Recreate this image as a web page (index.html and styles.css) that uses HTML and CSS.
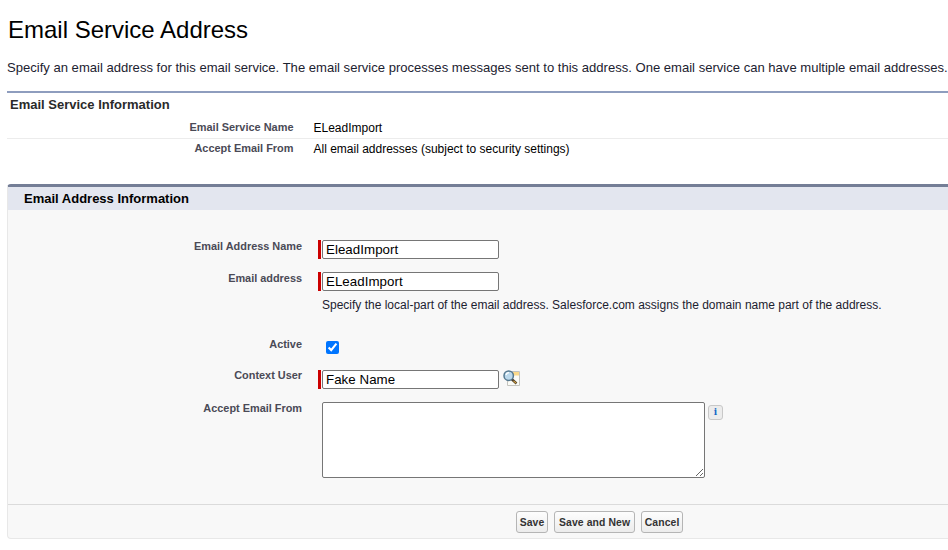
FILE: index.html
```html
<!DOCTYPE html>
<html lang="en">
<head>
<meta charset="utf-8">
<title>Email Service Address</title>
<link rel="stylesheet" href="styles.css">
</head>
<body>
<main class="page">
  <h1 class="title">Email Service Address</h1>
  <p class="intro">Specify an email address for this email service. The email service processes messages sent to this address. One email service can have multiple email addresses.</p>

  <section class="detail">
    <h2 class="detail-title">Email Service Information</h2>
    <div class="detail-row detail-row-line">
      <div class="detail-label">Email Service Name</div>
      <div class="detail-value">ELeadImport</div>
    </div>
    <div class="detail-row detail-row-last">
      <div class="detail-label">Accept Email From</div>
      <div class="detail-value">All email addresses (subject to security settings)</div>
    </div>
  </section>

  <section class="panel">
    <h2 class="panel-title">Email Address Information</h2>
    <form class="panel-body">
      <div class="form-row row-name">
        <label class="form-label">Email Address Name</label>
        <div class="control"><span class="req"></span><input class="text" type="text" value="EleadImport"></div>
      </div>
      <div class="form-row row-address">
        <label class="form-label">Email address</label>
        <div class="control-stack">
          <div class="control"><span class="req"></span><input class="text" type="text" value="ELeadImport"></div>
          <p class="help">Specify the local-part of the email address. Salesforce.com assigns the domain name part of the address.</p>
        </div>
      </div>
      <div class="form-row row-active">
        <label class="form-label">Active</label>
        <div class="control"><input class="check" type="checkbox" checked></div>
      </div>
      <div class="form-row row-user">
        <label class="form-label">Context User</label>
        <div class="control control-user"><span class="req"></span><input class="text" type="text" value="Fake Name">
          <svg class="lookup" width="18" height="17" viewBox="0 0 18 17" aria-hidden="true">
            <path d="M4.5 1.5h12v14h-12z" fill="#fbfbf6" stroke="#c4c4bf"/>
            <rect x="10" y="2" width="6" height="3.5" fill="#fbd98a"/>
            <path d="M8 8.5l5.5 5" stroke="#4a3d2a" stroke-width="2.4"/>
            <path d="M10.5 10.8l2.6 2.4" stroke="#d9a441" stroke-width="1.1"/>
            <circle cx="5.7" cy="5.7" r="4.7" fill="#bcd9ec" stroke="#55788f" stroke-width="1.5"/>
            <path d="M3 5a3.2 3.2 0 0 1 3-2.4" fill="none" stroke="#fff" stroke-width="1.3"/>
          </svg>
        </div>
      </div>
      <div class="form-row row-from">
        <label class="form-label">Accept Email From</label>
        <div class="control control-top">
          <textarea class="area"></textarea>
          <span class="info">i</span>
        </div>
      </div>
    </form>
    <div class="panel-footer">
      <button class="btn btn-save" type="button">Save</button>
      <button class="btn" type="button">Save and New</button>
      <button class="btn btn-cancel" type="button">Cancel</button>
    </div>
  </section>
</main>
</body>
</html>
```
FILE: styles.css
```css
html, body { margin: 0; padding: 0; background: #fff; }
body { width: 948px; height: 550px; overflow: hidden; font-family: "Liberation Sans", Arial, sans-serif; color: #000; }
.page { width: 948px; }
.title { margin: 0; padding: 16px 0 0 8px; height: 44px; box-sizing: border-box; font-size: 24px; line-height: 28px; font-weight: 400; color: #000; }
.intro { margin: 0; padding: 14px 0 0 7px; height: 39px; box-sizing: border-box; font-size: 13.07px; line-height: 20px; color: #1c2230; white-space: nowrap; }
.detail { margin: 8px 0 0 7px; border-top: 2px solid #8e9dbe; height: 93px; box-sizing: border-box; }
.detail-title { margin: 0; padding: 3px 0 0 3px; height: 24px; box-sizing: border-box; font-size: 13px; line-height: 18px; font-weight: 700; color: #2a2a2a; }
.detail-row { display: grid; grid-template-columns: 286.5px 1fr; column-gap: 20px; height: 22px; box-sizing: border-box; align-items: start; padding-top: 3px; }
.detail-row-last { padding-top: 2px; }
.detail-row-line { border-bottom: 1px solid #ececec; }
.detail-label { text-align: right; font-size: 10.95px; line-height: 15px; font-weight: 700; color: #4a4a56; }
.detail-value { font-size: 12px; line-height: 16px; color: #000; }
.panel { margin-left: 7px; border-top: 3px solid #747e96; border-left: 1px solid #e8e8e8; border-bottom: 1px solid #e8e8e8; border-radius: 4px 0 0 4px; background: #f8f8f8; height: 355px; box-sizing: border-box; display: flex; flex-direction: column; }
.panel-title { margin: 0; padding: 3px 0 0 16px; height: 23px; box-sizing: border-box; background: #e3e6ef; font-size: 13px; line-height: 17px; font-weight: 700; color: #000; }
.panel-body { flex: 1; padding-top: 29px; box-sizing: border-box; }
.form-row { display: grid; grid-template-columns: 294px 1fr; column-gap: 16px; align-items: start; }
.form-label { text-align: right; font-size: 10.9px; line-height: 14px; font-weight: 700; color: #4a4a56; padding-top: 0; }
.row-name { height: 32px; }
.row-address { height: 66px; }
.row-active { height: 31px; }
.row-user { height: 33px; }
.row-from { height: 100px; }
.control { display: flex; align-items: center; height: 20px; }
.control-user { margin-top: 1px; }
.control-top { align-items: flex-start; height: auto; margin-top: 1px; }
.req { width: 3px; height: 19px; background: #c00; margin-right: 1px; flex: none; }
.text { width: 177px; height: 19px; box-sizing: border-box; margin: 0; padding: 0 3px; border: 1px solid #767676; border-radius: 2px; background: #fff; font-family: "Liberation Sans", Arial, sans-serif; font-size: 13.3px; letter-spacing: 0.05px; color: #000; }
.help { margin: 6px 0 0 4px; font-size: 12px; line-height: 16px; color: #1c2230; white-space: nowrap; }
.check { width: 13px; height: 13px; margin: 1px 0 0 8px; accent-color: #0075ff; }
.lookup { margin: 0 0 2px 4px; flex: none; }
.area { width: 383px; height: 76px; box-sizing: border-box; margin: 0 0 0 4px; padding: 2px; border: 1px solid #767676; border-radius: 2px; background: #fff; }
.info { margin: 3px 0 0 3px; width: 15px; height: 15px; box-sizing: border-box; border: 1px solid #c8c8c8; border-radius: 3px; background: #ececec; font-family: "DejaVu Serif", serif; font-size: 9px; line-height: 13px; font-weight: 700; text-align: center; color: #1569c7; }
.panel-footer { height: 34px; box-sizing: border-box; border-top: 1px solid #dbdbdb; display: flex; justify-content: flex-start; align-items: flex-start; gap: 6px; padding: 6px 0 0 508px; }
.btn { height: 22px; box-sizing: border-box; margin: 0; padding: 0 4px; border: 1px solid #b5b5b5; border-radius: 3px; background: linear-gradient(#fdfdfd, #ececec); font-family: "Liberation Sans", Arial, sans-serif; font-size: 10.4px; font-weight: 700; letter-spacing: 0.1px; color: #333; }
.btn-save { width: 32px; padding: 0; }
.btn-cancel { width: 42px; padding: 0; }
```
